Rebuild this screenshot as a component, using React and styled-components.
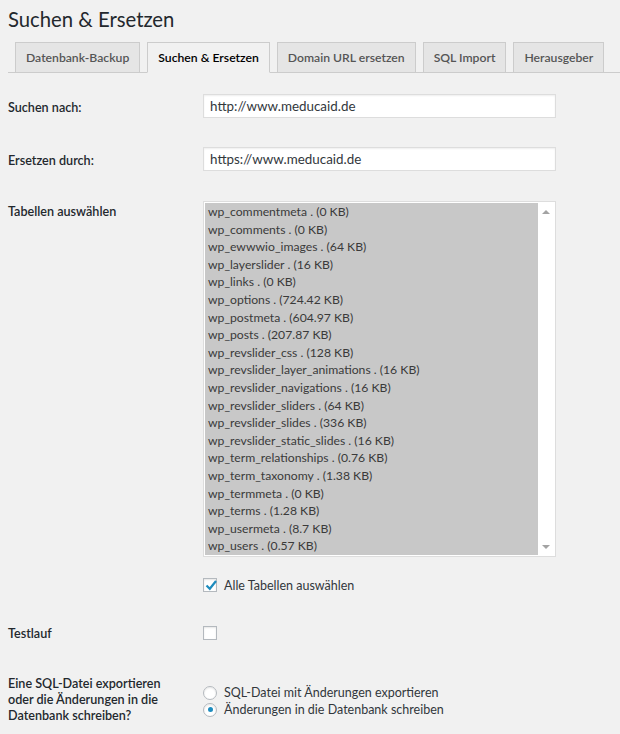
import React from 'react';
import styled, { createGlobalStyle, css } from 'styled-components';

const GlobalStyle = createGlobalStyle`
  html, body {
    margin: 0;
    padding: 0;
    background: #f1f1f1;
  }
  body {
    font-family: Lato, "Open Sans", "Liberation Sans", sans-serif;
    color: #32373c;
    font-size: 13px;
  }
  * {
    box-sizing: border-box;
  }
`;

const tables = [
  ['wp_commentmeta', '0 KB'],
  ['wp_comments', '0 KB'],
  ['wp_ewwwio_images', '64 KB'],
  ['wp_layerslider', '16 KB'],
  ['wp_links', '0 KB'],
  ['wp_options', '724.42 KB'],
  ['wp_postmeta', '604.97 KB'],
  ['wp_posts', '207.87 KB'],
  ['wp_revslider_css', '128 KB'],
  ['wp_revslider_layer_animations', '16 KB'],
  ['wp_revslider_navigations', '16 KB'],
  ['wp_revslider_sliders', '64 KB'],
  ['wp_revslider_slides', '336 KB'],
  ['wp_revslider_static_slides', '16 KB'],
  ['wp_term_relationships', '0.76 KB'],
  ['wp_term_taxonomy', '1.38 KB'],
  ['wp_termmeta', '0 KB'],
  ['wp_terms', '1.28 KB'],
  ['wp_usermeta', '8.7 KB'],
  ['wp_users', '0.57 KB'],
];

const tabs = ['Datenbank-Backup', 'Suchen & Ersetzen', 'Domain URL ersetzen', 'SQL Import', 'Herausgeber'];

const Wrap = styled.div`
  padding-left: 8px;
`;

const Title = styled.h1`
  margin: 0;
  padding-top: 6px;
  font-size: 20.3px;
  line-height: 26px;
  font-weight: 400;
  color: #23282d;
`;

const NavTabs = styled.nav`
  display: flex;
  margin-top: 10px;
  border-bottom: 1px solid #ccc;
`;

const Tab = styled.div`
  margin-left: 7px;
  margin-bottom: -1px;
  padding: 0 10px;
  height: 31px;
  line-height: 30px;
  border: 1px solid #ccc;
  background: #e5e5e5;
  color: #555;
  font-size: 12.2px;
  font-weight: 600;
  white-space: nowrap;
  ${props => props.active && css`
    background: #f1f1f1;
    border-bottom-color: #f1f1f1;
    color: #000;
  `}
`;

const Row = styled.div`
  display: flex;
  align-items: flex-start;
`;

const Th = styled.div`
  width: 195px;
  flex-shrink: 0;
  padding-top: ${props => props.top}px;
  font-size: 12.6px;
  line-height: 16px;
  font-weight: 600;
  color: #23282d;
`;

const Td = styled.div`
  flex: 1;
  padding-top: ${props => props.top}px;
  padding-bottom: ${props => props.bottom}px;
`;

const TextInput = styled.div`
  width: 353px;
  height: 24px;
  padding: 0 6px;
  line-height: 22px;
  background: #fff;
  border: 1px solid #ddd;
  box-shadow: inset 0 1px 2px rgba(0, 0, 0, .07);
  font-size: 13.4px;
  color: #32373c;
`;

const ListBox = styled.div`
  display: flex;
  width: 353px;
  height: 356px;
  padding: 1px;
  background: #fff;
  border: 1px solid #ddd;
`;

const Options = styled.div`
  flex: 1;
  background: #c8c8c8;
`;

const Option = styled.div`
  height: 17.6px;
  line-height: 17.6px;
  padding-left: 3px;
  font-size: 12.2px;
  color: #3a3a3a;
  white-space: nowrap;
`;

const ScrollBar = styled.div`
  width: 16px;
  display: flex;
  flex-direction: column;
  justify-content: space-between;
  align-items: center;
  padding: 7px 0 6px;
`;

const Arrow = styled.span`
  width: 0;
  height: 0;
  border-left: 4px solid transparent;
  border-right: 4px solid transparent;
  ${props => (props.down ? css`
    border-top: 4px solid #a3a3a3;
  ` : css`
    border-bottom: 4px solid #a3a3a3;
  `)}
`;

const CheckLine = styled.label`
  display: flex;
  align-items: center;
  gap: 7px;
  margin-top: ${props => props.gap || 0}px;
  height: ${props => props.h || 14}px;
  font-size: 12.5px;
  color: #32373c;
`;

const Box = styled.span`
  position: relative;
  width: 14px;
  height: 14px;
  flex-shrink: 0;
  background: #fff;
  border: 1px solid #b4b9be;
  box-shadow: inset 0 1px 2px rgba(0, 0, 0, .1);
  svg {
    position: absolute;
    left: -1px;
    top: -2px;
  }
`;

const Radio = styled.span`
  width: 14px;
  height: 14px;
  flex-shrink: 0;
  border-radius: 50%;
  background: #fff;
  border: 1px solid #b4b9be;
  box-shadow: inset 0 1px 2px rgba(0, 0, 0, .1);
  display: flex;
  align-items: center;
  justify-content: center;
  ${props => props.checked && css`
    &::after {
      content: '';
      width: 5px;
      height: 5px;
      border-radius: 50%;
      background: #1e8cbe;
    }
  `}
`;

const Checkbox = ({ checked }) => (
  <Box>
    {checked && (
      <svg width="16" height="16" viewBox="0 0 16 16">
        <path d="M3.5 8.5 L6.8 11.8 L13 4" fill="none" stroke="#1e8cbe" strokeWidth="2.2" />
      </svg>
    )}
  </Box>
);

const App = () => (
  <Wrap>
    <GlobalStyle />
    <Title>Suchen &amp; Ersetzen</Title>
    <NavTabs>
      {tabs.map((t, i) => <Tab key={t} active={i === 1}>{t}</Tab>)}
    </NavTabs>

    <Row>
      <Th top={27}>Suchen nach:</Th>
      <Td top={21} bottom={14}>
        <TextInput>http://www.meducaid.de</TextInput>
      </Td>
    </Row>
    <Row>
      <Th top={21}>Ersetzen durch:</Th>
      <Td top={15} bottom={15}>
        <TextInput>https://www.meducaid.de</TextInput>
      </Td>
    </Row>
    <Row>
      <Th top={18}>Tabellen auswählen</Th>
      <Td top={15} bottom={15}>
        <ListBox>
          <Options>
            {tables.map(([name, size]) => (
              <Option key={name}>{name} . ({size})</Option>
            ))}
          </Options>
          <ScrollBar>
            <Arrow />
            <Arrow down />
          </ScrollBar>
        </ListBox>
        <CheckLine gap={21}>
          <Checkbox checked />
          Alle Tabellen auswählen
        </CheckLine>
      </Td>
    </Row>
    <Row>
      <Th top={19}>Testlauf</Th>
      <Td top={19} bottom={15}>
        <CheckLine>
          <Checkbox />
        </CheckLine>
      </Td>
    </Row>
    <Row>
      <Th top={21}>
        Eine SQL-Datei exportieren<br />
        oder die Änderungen in die<br />
        Datenbank schreiben?
      </Th>
      <Td top={29} bottom={15}>
        <CheckLine h={17}>
          <Radio />
          SQL-Datei mit Änderungen exportieren
        </CheckLine>
        <CheckLine h={17}>
          <Radio checked />
          Änderungen in die Datenbank schreiben
        </CheckLine>
      </Td>
    </Row>
  </Wrap>
);

export default App;
